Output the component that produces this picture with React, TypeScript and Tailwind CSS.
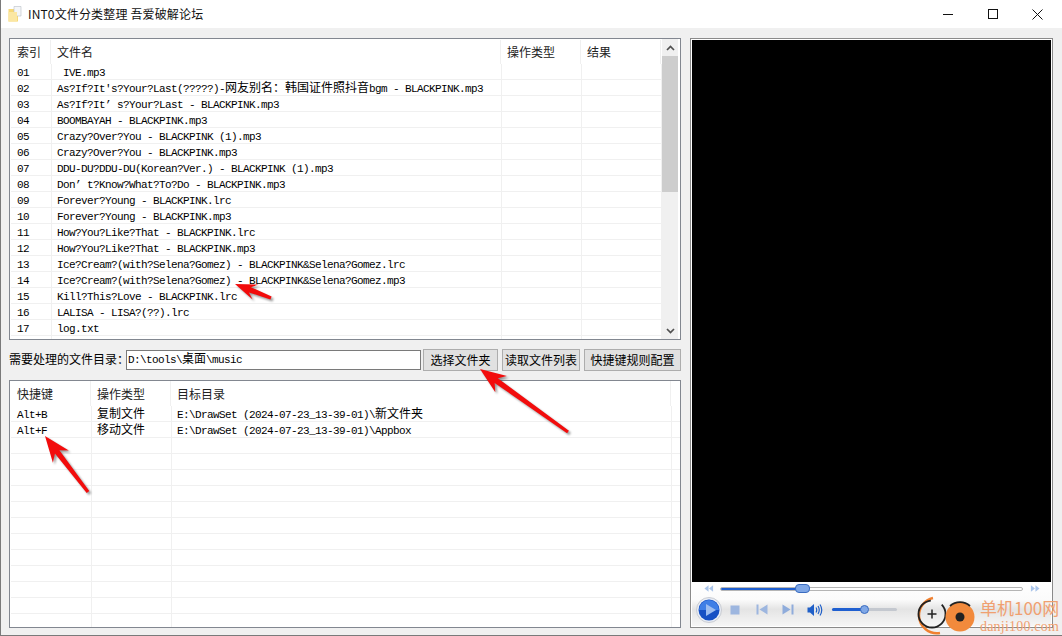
import React from "react";

const CJK = /([\u3000-\u9fff\uff00-\uffef]+)/;

function T({ s }: { s: string }) {
  const parts = s.split(CJK);
  return (
    <span className="whitespace-pre">
      {parts.map((p, i) =>
        CJK.test(p) ? (
          <span key={i} className="text-[12px] font-['Noto_Sans_CJK_SC',sans-serif]">{p}</span>
        ) : (
          <span key={i} className="text-[11px] tracking-[-0.6px] font-['Liberation_Mono','Noto_Sans_CJK_SC',monospace]">{p}</span>
        )
      )}
    </span>
  );
}

const files = [
  " IVE.mp3",
  "As?If?It′s?Your?Last(?????)-网友别名：韩国证件照抖音bgm - BLACKPINK.mp3",
  "As?If?It’ s?Your?Last - BLACKPINK.mp3",
  "BOOMBAYAH - BLACKPINK.mp3",
  "Crazy?Over?You - BLACKPINK (1).mp3",
  "Crazy?Over?You - BLACKPINK.mp3",
  "DDU-DU?DDU-DU(Korean?Ver.) - BLACKPINK (1).mp3",
  "Don’ t?Know?What?To?Do - BLACKPINK.mp3",
  "Forever?Young - BLACKPINK.lrc",
  "Forever?Young - BLACKPINK.mp3",
  "How?You?Like?That - BLACKPINK.lrc",
  "How?You?Like?That - BLACKPINK.mp3",
  "Ice?Cream?(with?Selena?Gomez) - BLACKPINK&Selena?Gomez.lrc",
  "Ice?Cream?(with?Selena?Gomez) - BLACKPINK&Selena?Gomez.mp3",
  "Kill?This?Love - BLACKPINK.lrc",
  "LALISA - LISA?(??).lrc",
  "log.txt",
  "",
];

const rules: [string, string, string][] = [
  ["Alt+B", "复制文件", "E:\\DrawSet (2024-07-23_13-39-01)\\新文件夹"],
  ["Alt+F", "移动文件", "E:\\DrawSet (2024-07-23_13-39-01)\\Appbox"],
  ...Array.from({ length: 12 }, () => ["", "", ""] as [string, string, string]),
];

function Arrow({ x1, y1, x2, y2, head, half }: { x1: number; y1: number; x2: number; y2: number; head: number; half: number }) {
  const dx = x2 - x1;
  const dy = y2 - y1;
  const len = Math.hypot(dx, dy);
  const ux = dx / len;
  const uy = dy / len;
  const px = -uy;
  const py = ux;
  const hx = x1 + ux * head;
  const hy = y1 + uy * head;
  const nx = x1 + ux * (head - 6);
  const ny = y1 + uy * (head - 6);
  const pts = [
    [x1, y1],
    [hx + px * half, hy + py * half],
    [nx + px * 2.8, ny + py * 2.8],
    [x2 + px * 1.6, y2 + py * 1.6],
    [x2 - px * 1.6, y2 - py * 1.6],
    [nx - px * 2.8, ny - py * 2.8],
    [hx - px * half, hy - py * half],
  ]
    .map((p) => p.join(","))
    .join(" ");
  return (
    <g>
      <polygon points={pts} fill="#000" opacity="0.4" transform="translate(2,2)" filter="url(#soft)" />
      <polygon points={pts} fill="#f20c0c" />
    </g>
  );
}

function Scrollbar() {
  return (
    <div className="w-[16px] h-full bg-[#f0f0f0] flex flex-col items-center">
      <div className="h-[17px] w-full flex items-center justify-center">
        <svg width="9" height="6" viewBox="0 0 9 6"><path d="M1 5 L4.5 1.5 L8 5" fill="none" stroke="#505050" strokeWidth="1.7" /></svg>
      </div>
      <div className="h-[136px] w-full bg-[#cdcdcd]" />
      <div className="flex-1" />
      <div className="h-[17px] w-full flex items-center justify-center">
        <svg width="9" height="6" viewBox="0 0 9 6"><path d="M1 1 L4.5 4.5 L8 1" fill="none" stroke="#505050" strokeWidth="1.7" /></svg>
      </div>
    </div>
  );
}

function Btn({ w, label }: { w: string; label: string }) {
  return (
    <div className={`${w} h-[22px] bg-[#e1e1e1] border border-[#adadad] flex items-center justify-center text-[12px] text-black font-['Noto_Sans_CJK_SC',sans-serif]`}>
      {label}
    </div>
  );
}

function Player() {
  return (
    <div className="h-[44px] bg-[linear-gradient(#ffffff_0%,#fbfbfb_40%,#e4e4e4_62%,#f6f6f6_100%)] flex flex-col">
      <div className="h-[13px] flex items-center pl-[12px] gap-[6px]">
        <svg className="shrink-0" width="10" height="7" viewBox="0 0 11 7"><path d="M5 0 V7 L0.5 3.5Z M10 0 V7 L5.5 3.5Z" fill="#a9c4ea" /></svg>
        <div className="relative shrink-0 w-[303px] h-[4px] rounded-full border border-[#b5b5b5] bg-white">
          <div className="h-full w-[82px] bg-[#1f5fd0] rounded-full" />
          <div className="absolute left-[74px] top-[-4px] w-[15px] h-[9px] rounded-[4px] bg-[#7fa7e6] border border-[#3a6cc0]" />
        </div>
        <svg className="shrink-0 ml-[1px]" width="10" height="7" viewBox="0 0 11 7"><path d="M1 0 V7 L5.5 3.5Z M6 0 V7 L10.5 3.5Z" fill="#a9c4ea" /></svg>
      </div>
      <div className="flex-1 flex items-center pl-[4px] pb-[2px]">
        <svg width="26" height="26" viewBox="0 0 26 26">
          <circle cx="13" cy="13" r="12.5" fill="#e8edf5" stroke="#c9ccd2" />
          <circle cx="13" cy="13" r="10.5" fill="#1650c4" />
          <path d="M3 13 A10 10 0 0 1 23 13Z" fill="#3f7fe6" />
          <path d="M10 7 L20 13 L10 19Z" fill="#9dbdf0" />
        </svg>
        <svg className="ml-[8px]" width="10" height="10" viewBox="0 0 10 10"><rect width="9" height="9" x="0.5" y="0.5" fill="#9db6df" /></svg>
        <svg className="ml-[16px]" width="12" height="11" viewBox="0 0 12 11"><path d="M0.5 0.5 H2.5 V10.5 H0.5Z M11.5 0.5 V10.5 L3.5 5.5Z" fill="#9db6df" /></svg>
        <svg className="ml-[14px]" width="12" height="11" viewBox="0 0 12 11"><path d="M0.5 0.5 V10.5 L8.5 5.5Z M9.5 0.5 H11.5 V10.5 H9.5Z" fill="#8facdb" /></svg>
        <svg className="ml-[13px]" width="16" height="14" viewBox="0 0 16 14">
          <path d="M0.5 4.5 H3 L7 1 V13 L3 9.5 H0.5Z" fill="#1f5fc8" />
          <path d="M9 4.5 Q10.5 7 9 9.5 M11 3 Q13.5 7 11 11 M13 1.5 Q16.5 7 13 12.5" fill="none" stroke="#1f5fc8" strokeWidth="1.2" />
        </svg>
        <div className="relative ml-[9px] w-[65px] h-[3px] rounded-full bg-[#c4c8cf]">
          <div className="h-full w-[33px] bg-[#1f5fd0] rounded-full" />
          <div className="absolute left-[28px] top-[-3px] w-[9px] h-[9px] rounded-full bg-[#7fa7e6] border border-[#3a6cc0]" />
        </div>
      </div>
    </div>
  );
}

export default function App() {
  return (
    <div className="relative w-[1062px] h-[636px] overflow-hidden bg-[#f0f0f0] border-l border-b border-[#7a7a7a] flex flex-col font-['Noto_Sans_CJK_SC',sans-serif] text-black">
      {/* title bar */}
      <div className="h-[28px] bg-white flex items-center pl-[7px] shrink-0">
        <svg width="14" height="16" viewBox="0 0 14 16">
          <path d="M0.5 3 H6 L7.5 1 H10 V15.5 H0.5Z" fill="#f7d978" />
          <path d="M6 0.5 H13 V10 H6Z" fill="#f4f6f8" stroke="#b9c0c6" strokeWidth="0.6" />
          <path d="M0.5 6 H9 V15.5 H0.5Z" fill="#fbe7a3" />
        </svg>
        <span className="ml-[6px] text-[12px] text-[#111] tracking-[0.15px] font-['Noto_Sans_CJK_SC',sans-serif] whitespace-pre">INT0文件分类整理 吾爱破解论坛</span>
        <div className="ml-auto flex h-full">
          <div className="w-[45px] flex items-center justify-center">
            <svg width="10" height="10" viewBox="0 0 10 10"><path d="M0 5.5 H10" stroke="#111" strokeWidth="1" /></svg>
          </div>
          <div className="w-[45px] flex items-center justify-center">
            <svg width="10" height="10" viewBox="0 0 10 10"><rect x="0.5" y="0.5" width="9" height="9" fill="none" stroke="#111" strokeWidth="1" /></svg>
          </div>
          <div className="w-[45px] mr-[2px] flex items-center justify-center">
            <svg width="11" height="11" viewBox="0 0 11 11"><path d="M0.5 0.5 L10.5 10.5 M10.5 0.5 L0.5 10.5" stroke="#111" strokeWidth="1" /></svg>
          </div>
        </div>
      </div>

      {/* body */}
      <div className="flex pt-[10px] pl-[8px] gap-[9px]">
        {/* left column */}
        <div className="w-[672px] flex flex-col">
          {/* file list */}
          <div className="h-[302px] bg-white border border-[#828790] flex overflow-hidden">
            <div className="w-[652px] pl-[1px]">
              <div className="h-[25px] pt-[1px] flex">
                {[["w-[40px]", "索引"], ["w-[450px]", "文件名"], ["w-[80px]", "操作类型"], ["w-[80px]", "结果"]].map(([w, t]) => (
                  <div key={t} className={`${w} pl-[6px] flex items-center border-r border-[#f0f0f0] text-[12px] text-[#222]`}>{t}</div>
                ))}
              </div>
              {files.map((f, i) => (
                <div key={i} className="flex h-[16px] border-b border-[#f0f0f0] text-[12px] leading-[12px]">
                  <div className="w-[41px] pl-[6px] pt-[1px] border-r border-[#f0f0f0]">
                    <T s={f ? String(i + 1).padStart(2, "0") : ""} />
                  </div>
                  <div className="w-[450px] pl-[5px] pt-[1px] border-r border-[#f0f0f0]"><T s={f} /></div>
                  <div className="w-[80px] border-r border-[#f0f0f0]" />
                  <div className="w-[80px] border-r border-[#f0f0f0]" />
                </div>
              ))}
            </div>
            <Scrollbar />
          </div>

          {/* path row */}
          <div className="flex mt-[9px] h-[22px] items-start">
            <div className="h-[20px] flex items-center text-[12px] w-[117px] whitespace-pre">需要处理的文件目录：</div>
            <div className="w-[295px] mt-[1px] h-[20px] pb-[2px] bg-white border border-[#7a7a7a] flex items-center pl-[1px] text-[12px] leading-[12px]">
              <T s={"D:\\tools\\桌面\\music"} />
            </div>
            <div className="ml-[2px]"><Btn w="w-[75px]" label="选择文件夹" /></div>
            <div className="ml-[4px]"><Btn w="w-[78px]" label="读取文件列表" /></div>
            <div className="ml-[4px]"><Btn w="w-[97px]" label="快捷键规则配置" /></div>
          </div>

          {/* rule list */}
          <div className="mt-[9px] h-[248px] bg-white border border-[#828790] pl-[1px] overflow-hidden">
            <div className="h-[25px] flex">
              {[["w-[80px]", "快捷键"], ["w-[80px]", "操作类型"], ["w-[500px]", "目标目录"]].map(([w, t]) => (
                <div key={t} className={`${w} pl-[6px] flex items-center border-r border-[#f0f0f0] text-[12px] text-[#222]`}>{t}</div>
              ))}
            </div>
            {rules.map((r, i) => (
              <div key={i} className="flex h-[16px] border-b border-[#f0f0f0] text-[12px] leading-[12px]">
                <div className="w-[81px] pl-[6px] pt-[1px] border-r border-[#f0f0f0]"><T s={r[0]} /></div>
                <div className="w-[80px] pl-[5px] pt-[1px] border-r border-[#f0f0f0]"><T s={r[1]} /></div>
                <div className="w-[500px] pl-[5px] pt-[1px] border-r border-[#f0f0f0]"><T s={r[2]} /></div>
              </div>
            ))}
          </div>
        </div>

        {/* right panel */}
        <div className="w-[363px] h-[590px] border border-[#8a8a8a] bg-white p-[1px] flex flex-col">
          <div className="flex-1 bg-black" />
          <Player />
        </div>
      </div>

      {/* annotations */}
      <svg className="absolute left-[-1px] top-0 pointer-events-none" width="1062" height="636" viewBox="0 0 1062 636">
        <defs>
          <filter id="soft" x="-20%" y="-20%" width="140%" height="140%">
            <feGaussianBlur stdDeviation="1.2" />
          </filter>
        </defs>
        <Arrow x1={235} y1={284} x2={271} y2={298} head={22} half={8} />
        <Arrow x1={480} y1={369} x2={568} y2={432} head={26} half={10} />
        <Arrow x1={45} y1={436} x2={88} y2={492} head={26} half={10} />
      </svg>

      {/* watermark */}
      <div className="absolute left-[914px] top-[596px] w-[148px] h-[40px] flex items-start pointer-events-none">
        <svg width="64" height="40" viewBox="0 0 64 40" className="shrink-0">
          <path d="M18 2 A18 18 0 0 0 4 20 A18 18 0 0 0 25 37" fill="none" stroke="#f08030" strokeWidth="2.5" />
          <circle cx="17" cy="18" r="13.5" fill="none" stroke="#222" strokeWidth="1.8" strokeDasharray="62 12" />
          <path d="M12.5 18 H21.5 M17 13.5 V22.5" stroke="#222" strokeWidth="1.5" />
          <circle cx="45" cy="21" r="14.5" fill="#f28a3c" />
          <path d="M35 10 A15 15 0 0 1 55 10" fill="none" stroke="#222" strokeWidth="1.8" />
          <circle cx="45" cy="21" r="4.5" fill="#222" />
        </svg>
        <div className="ml-[1px] flex flex-col text-[#f0a070] leading-none">
          <span className="text-[17px] leading-[20px] mt-[2px] font-['Noto_Sans_CJK_SC',sans-serif] whitespace-pre">单机100网</span>
          <span className="text-[14px] leading-[16px] mt-[1px] font-['Liberation_Serif',serif] tracking-[0.2px]">danji100.com</span>
        </div>
      </div>
    </div>
  );
}
